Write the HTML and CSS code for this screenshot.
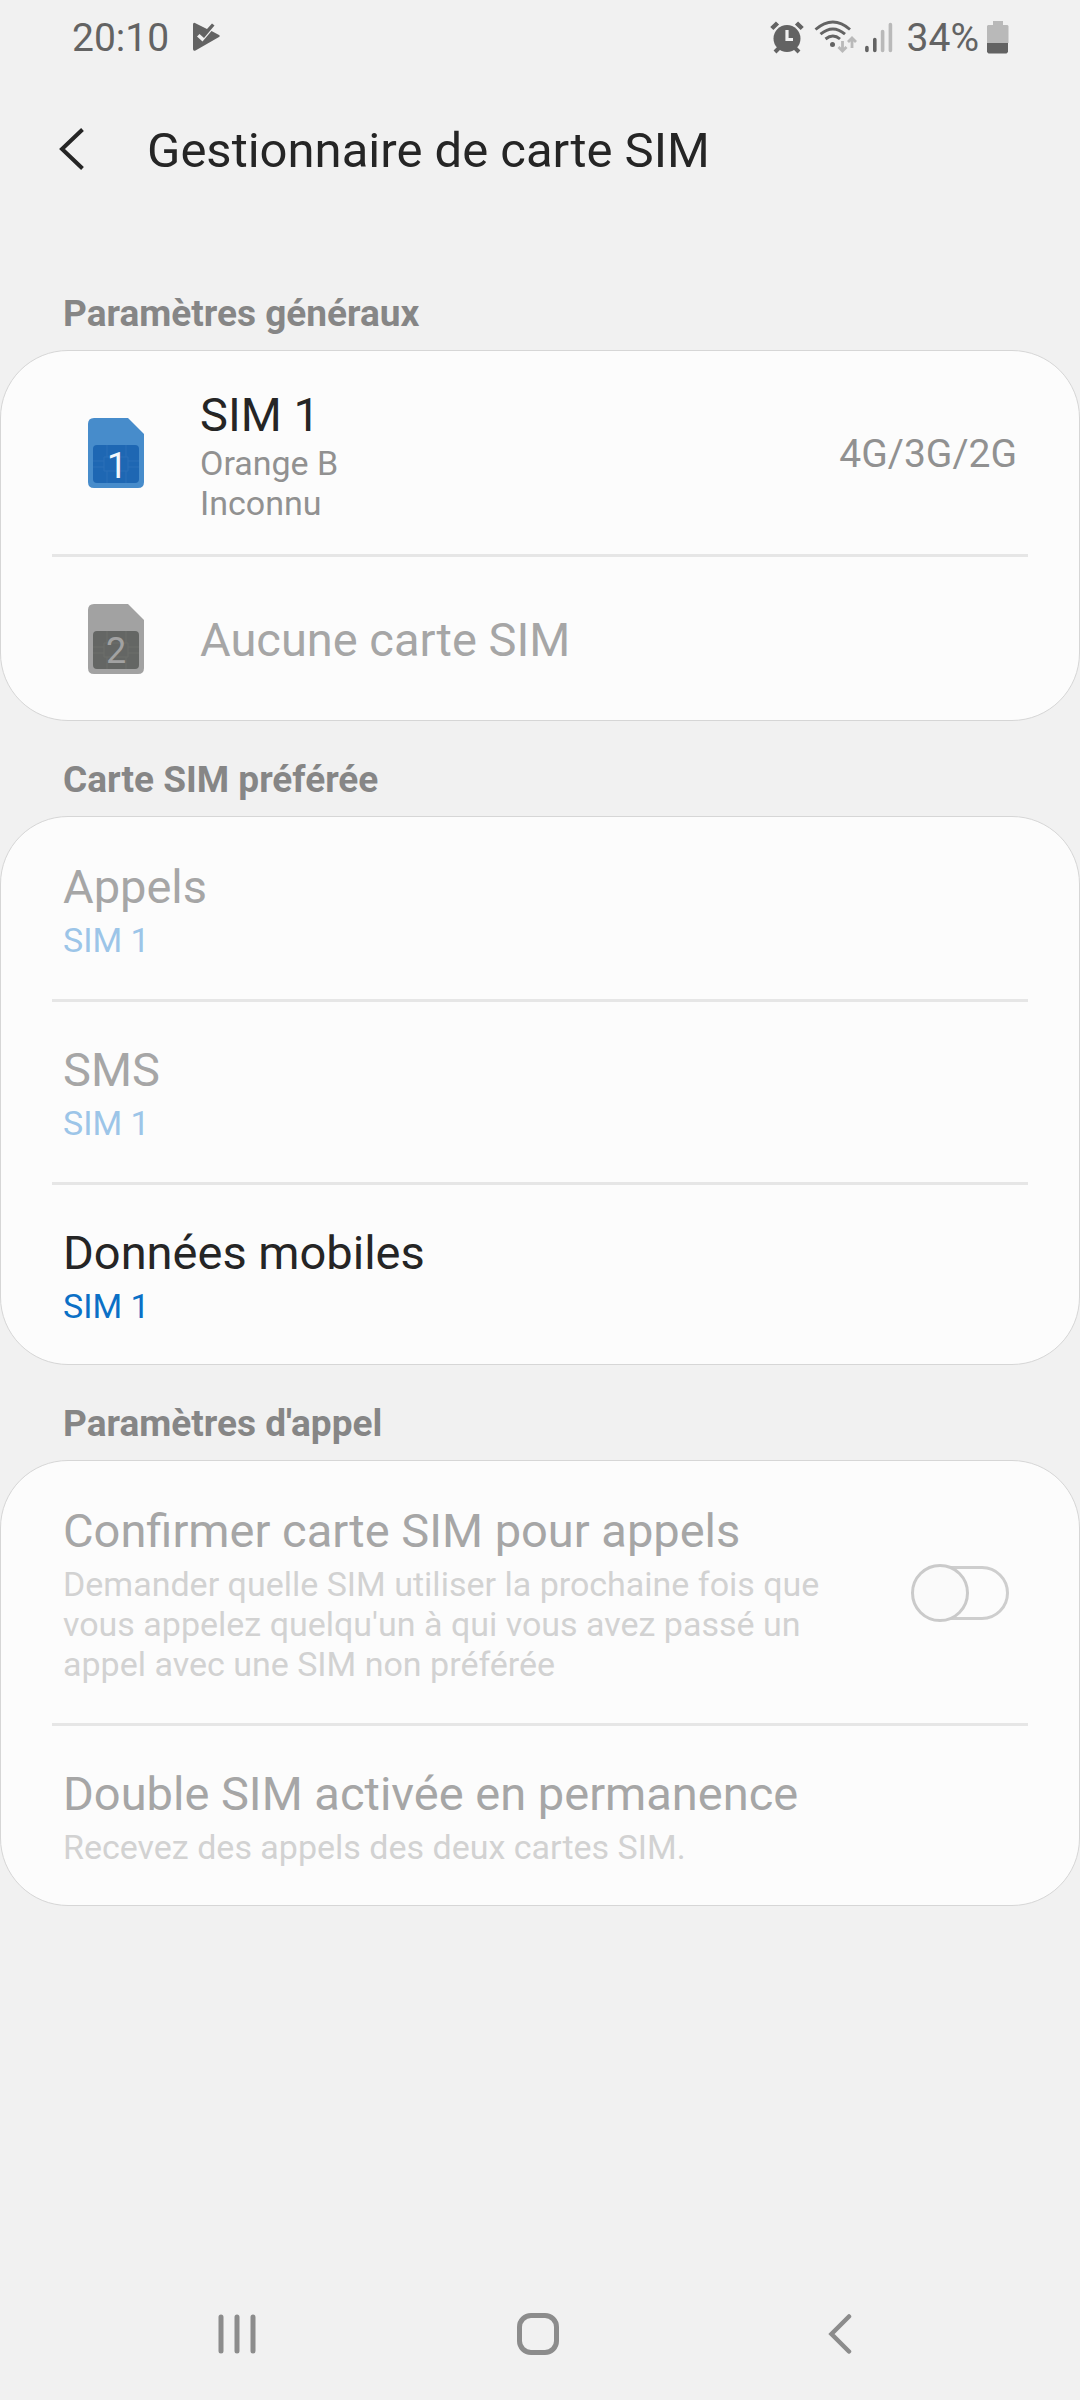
FILE: index.html
```html
<!DOCTYPE html>
<html lang="fr">
<head>
<meta charset="utf-8">
<meta name="viewport" content="width=device-width, initial-scale=1">
<title>Gestionnaire de carte SIM</title>
<link rel="stylesheet" href="styles.css">
</head>
<body>
<div class="status">
  <span class="clock">20:10</span>
  <svg class="play" width="28" height="30" viewBox="0 0 28 30" aria-hidden="true">
    <path fill="#636363" d="M1 2.500Q1 .3 3 .9L15 7l5-5.500 2.500 2-10.500 12.500L7.500 12 5 14.500l5.500 5L19.500 9l7.500 4q1.500 1 0 2L3.500 28.500Q1 29.500 1 27z"/>
  </svg>
  <span class="spacer"></span>
  <svg class="alarm" width="34" height="34" viewBox="0 0 34 34" aria-hidden="true">
    <g stroke="#636363" stroke-width="4.500"><path d="M1.800 8.500 7.500 3M26.500 3l5.700 5.500"/><path stroke-width="4" d="m5 32 4-4M29 32l-4-4"/></g>
    <circle cx="17" cy="18.500" r="13.500" fill="#636363"/>
    <path d="M17 10v9.500h6" fill="none" stroke="#f1f1f1" stroke-width="3.200"/>
  </svg>
  <svg class="wifi" width="44" height="34" viewBox="0 0 44 34" aria-hidden="true">
    <g fill="none" stroke="#636363" stroke-width="2.900">
      <path d="M1.500 9.500Q19-5.500 36 9.500M6.500 14.200q12.500-10.400 24.500 0M11.500 19q7.500-6 14.500 0"/>
    </g>
    <circle cx="18.500" cy="24.500" r="2.500" fill="#636363"/>
    <path d="M28.500 21v9.500M24.500 27l4 4 4-4M38 28v-9.500M34 22l4-4 4 4" fill="none" stroke="#b9b9b9" stroke-width="2.800"/>
  </svg>
  <svg class="signal" width="28" height="34" viewBox="0 0 28 34" aria-hidden="true">
    <g stroke-width="3.600" stroke-linecap="round"><path stroke="#636363" d="M1.900 27.500v3M9.800 19.500v11"/><path stroke="#b9b9b9" d="M17.600 11.500v19M25.400 4.500v26"/></g>
  </svg>
  <span class="percent">34%</span>
  <svg width="22" height="34" viewBox="0 0 22 34" aria-hidden="true">
    <path fill="#b9b9b9" d="M6 1h10v4h4.500l1 1v17H0V6l1-1h5z"/><path fill="#636363" d="M0 23h21v9l-1.500 1.500h-18L0 32z"/>
  </svg>
</div>

<header class="appbar">
  <button class="back" type="button" aria-label="Retour">
    <svg width="26" height="42" viewBox="0 0 26 42"><path d="M23.500 1.500 3 21l20.500 19.500" fill="none" stroke="#252525" stroke-width="4"/></svg>
  </button>
  <h1>Gestionnaire de carte SIM</h1>
</header>

<main>
  <section>
    <h2>Paramètres généraux</h2>
    <div class="card">
      <button class="row sim-row" type="button">
        <svg class="sim" width="56" height="70" viewBox="0 0 56 70" aria-hidden="true">
          <path fill="#478ccb" d="M6 0h34l16 16v48q0 6-6 6H6q-6 0-6-6V6q0-6 6-6z"/>
          <rect x="5" y="27" width="46" height="38" rx="4" fill="#1e67b3"/>
          <path d="M5 43h11M5 49h11M40 43h11M40 49h11M19 27v12M19 53v12M38 27v12M38 53v12M16 39h24v14H16z" fill="none" stroke="#2a70b8"/>
          <text class="digit" x="29" y="60" fill="#f2f7fc">1</text>
        </svg>
        <span class="text">
          <span class="title">SIM 1</span>
          <span class="sub">Orange B</span>
          <span class="sub">Inconnu</span>
        </span>
        <span class="value">4G/3G/2G</span>
      </button>
      <button class="row slot-row" type="button" disabled>
        <svg class="sim" width="56" height="70" viewBox="0 0 56 70" aria-hidden="true">
          <path fill="#a2a2a2" d="M6 0h34l16 16v48q0 6-6 6H6q-6 0-6-6V6q0-6 6-6z"/>
          <rect x="5" y="27" width="46" height="38" rx="4" fill="#646664"/>
          <path d="M5 43h11M5 49h11M40 43h11M40 49h11M19 27v12M19 53v12M38 27v12M38 53v12M16 39h24v14H16z" fill="none" stroke="#6d6e6b"/>
          <text class="digit" x="28" y="59" fill="#a2a2a2">2</text>
        </svg>
        <span class="text"><span class="title">Aucune carte SIM</span></span>
      </button>
    </div>
  </section>

  <section>
    <h2>Carte SIM préférée</h2>
    <div class="card list">
      <button class="row" type="button" disabled>
        <span class="text"><span class="title">Appels</span><span class="sub choice">SIM 1</span></span>
      </button>
      <button class="row" type="button" disabled>
        <span class="text"><span class="title">SMS</span><span class="sub choice">SIM 1</span></span>
      </button>
      <button class="row" type="button">
        <span class="text"><span class="title">Données mobiles</span><span class="sub choice">SIM 1</span></span>
      </button>
    </div>
  </section>

  <section>
    <h2>Paramètres d'appel</h2>
    <div class="card list">
      <label class="row off" for="confirm">
        <span class="text">
          <span class="title">Confirmer carte SIM pour appels</span>
          <span class="sub">Demander quelle SIM utiliser la prochaine fois que vous appelez quelqu'un à qui vous avez passé un appel avec une SIM non préférée</span>
        </span>
        <input class="switch" type="checkbox" id="confirm" disabled>
      </label>
      <button class="row" type="button" disabled>
        <span class="text"><span class="title">Double SIM activée en permanence</span><span class="sub">Recevez des appels des deux cartes SIM.</span></span>
      </button>
    </div>
  </section>
</main>

<nav class="navbar">
  <button type="button" aria-label="Applications récentes">
    <svg width="38" height="42" viewBox="0 0 38 42"><path d="M3 4v34M19 4v34M35 4v34" stroke="#8c8c8c" stroke-width="5" stroke-linecap="round"/></svg>
  </button>
  <button type="button" aria-label="Accueil">
    <svg width="42" height="42" viewBox="0 0 42 42"><rect x="2.500" y="2.500" width="37" height="37" rx="11.500" fill="none" stroke="#8c8c8c" stroke-width="5"/></svg>
  </button>
  <button type="button" aria-label="Précédent">
    <svg width="24" height="42" viewBox="0 0 24 42"><path d="M21 3.500 3.500 21 21 38.500" fill="none" stroke="#8c8c8c" stroke-width="4.500" stroke-linecap="round"/></svg>
  </button>
</nav>
</body>
</html>
```
FILE: styles.css
```css
* {
  box-sizing: border-box;
}

body {
  margin: 0;
  min-height: 100vh;
  display: flex;
  flex-direction: column;
  background: #f1f1f1;
  color: #252525;
  font-family: Roboto, "Liberation Sans", sans-serif;
}

button {
  margin: 0;
  padding: 0;
  border: 0;
  background: none;
  color: inherit;
  font: inherit;
  text-align: left;
}

svg {
  display: block;
  flex: none;
}

/* Status bar */
.status {
  display: flex;
  align-items: center;
  height: 74px;
  padding: 0 71px 0 72px;
  color: #636363;
  font-size: 39px;
  line-height: 48px;
}

.clock,
.percent {
  padding-top: 2px;
}

.play {
  margin-left: 23px;
}

.spacer {
  flex: 1;
}

.alarm {
  margin-right: 10px;
}

.wifi {
  margin-right: 7px;
}

.signal {
  margin-right: 14px;
}

.percent {
  margin-right: 8px;
}

/* Title bar */
.appbar {
  display: flex;
  align-items: center;
  height: 150px;
  padding: 0 59px;
  gap: 62px;
}

h1 {
  margin: 0;
  padding-top: 4px;
  font-size: 49px;
  font-weight: 400;
  line-height: 60px;
}

/* Sections */
h2 {
  margin: 0;
  padding: 32px 63px 9px;
  color: #868686;
  font-size: 37px;
  font-weight: 700;
  line-height: 54px;
}

section:first-child h2 {
  padding-top: 63px;
}

.card {
  border: 1px solid #d6d6d6;
  border-radius: 68px;
  background: #fcfcfc;
}

.row {
  position: relative;
  display: flex;
  align-items: center;
  width: 100%;
  padding: 0 62px;
}

.row + .row {
  margin-top: 3px;
}

.row + .row::before {
  content: "";
  position: absolute;
  top: -3px;
  right: 51px;
  left: 51px;
  height: 3px;
  background: #e6e6e6;
}

.text {
  flex: 1;
  padding: 40px 0 39px;
}

.list {
  padding-top: 2px;
}

.list .row:last-child .text {
  padding-bottom: 38px;
}

.title,
.sub {
  display: block;
}

.title {
  margin-bottom: 5px;
  font-size: 47px;
  line-height: 56px;
}

.sub {
  color: #919191;
  font-size: 34px;
  line-height: 40px;
}

.choice {
  color: #0b70c6;
}

.value {
  padding-top: 2px;
  color: #919191;
  font-size: 39px;
  line-height: 48px;
}

.sim-row,
.slot-row {
  padding-left: 87px;
}

.sim {
  margin-right: 56px;
}

.sim-row .text {
  padding: 36px 0 31px;
}

.sim-row .title,
.slot-row .title {
  margin-bottom: 0;
}

.slot-row .text {
  padding: 55px 0 52px;
}

.digit {
  font-size: 36px;
  text-anchor: middle;
}

.row:disabled,
.off {
  color: #a6a6a6;
}

.row:disabled .sub,
.off .sub {
  color: #d2d2d2;
}

.row:disabled .choice {
  color: #9cc5e8;
}

/* Toggle switch */
.off {
  padding-right: 70px;
  gap: 46px;
}

.switch {
  position: relative;
  flex: none;
  appearance: none;
  width: 98px;
  height: 58px;
  margin: 0;
}

.switch::before,
.switch::after {
  content: "";
  position: absolute;
  border: 3px solid #cecece;
}

.switch::before {
  inset: 2px 0 2px 2px;
  border-radius: 27px;
}

.switch::after {
  inset: 0 40px 0 0;
  border-color: #cacaca;
  border-radius: 50%;
  background: #fafafa;
}

/* Navigation bar */
.navbar {
  display: grid;
  grid-template-columns: repeat(3, 28%);
  justify-content: center;
  height: 132px;
  margin-top: auto;
  padding-right: 3px;
}

.navbar button {
  display: flex;
  align-items: center;
  justify-content: center;
}
```
